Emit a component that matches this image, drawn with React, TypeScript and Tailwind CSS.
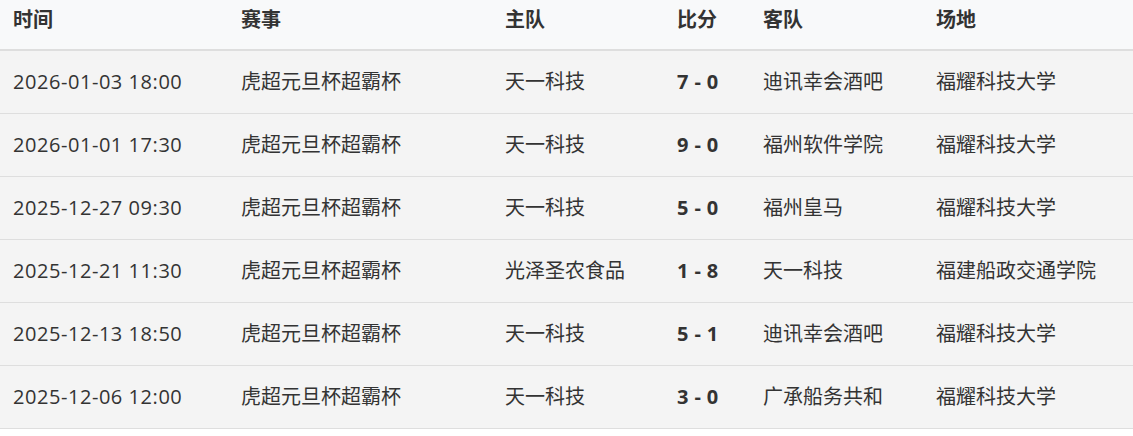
const rows = [
  { time: "2026-01-03 18:00", event: "虎超元旦杯超霸杯", home: "天一科技", score: "7 - 0", away: "迪讯幸会酒吧", venue: "福耀科技大学" },
  { time: "2026-01-01 17:30", event: "虎超元旦杯超霸杯", home: "天一科技", score: "9 - 0", away: "福州软件学院", venue: "福耀科技大学" },
  { time: "2025-12-27 09:30", event: "虎超元旦杯超霸杯", home: "天一科技", score: "5 - 0", away: "福州皇马", venue: "福耀科技大学" },
  { time: "2025-12-21 11:30", event: "虎超元旦杯超霸杯", home: "光泽圣农食品", score: "1 - 8", away: "天一科技", venue: "福建船政交通学院" },
  { time: "2025-12-13 18:50", event: "虎超元旦杯超霸杯", home: "天一科技", score: "5 - 1", away: "迪讯幸会酒吧", venue: "福耀科技大学" },
  { time: "2025-12-06 12:00", event: "虎超元旦杯超霸杯", home: "天一科技", score: "3 - 0", away: "广承船务共和", venue: "福耀科技大学" },
];

const cols = ["w-[228px]", "w-[264px]", "w-[172px]", "w-[86px]", "w-[173px]", "flex-1"];

export default function App() {
  return (
    <div className="w-[1133px] h-[436px] bg-white text-[#333] text-[20px] overflow-hidden" style={{ fontFamily: '"Open Sans", "Noto Sans CJK SC", sans-serif' }}>
      <div className="flex h-[51px] items-center bg-[#f8f9fa] border-b-2 border-[#dedede] font-bold">
        {["时间", "赛事", "主队", "比分", "客队", "场地"].map((h, i) => (
          <div key={h} className={`${cols[i]} pl-[13px] pb-[10px]`}>{h}</div>
        ))}
      </div>
      {rows.map((r) => (
        <div key={r.time} className="flex h-[63px] items-center bg-[#f4f4f4] border-b border-[#dedede]">
          <div className={`${cols[0]} pl-[13px] tracking-[0.55px]`}>{r.time}</div>
          <div className={`${cols[1]} pl-[13px]`}>{r.event}</div>
          <div className={`${cols[2]} pl-[13px]`}>{r.home}</div>
          <div className={`${cols[3]} pl-[13px] font-bold tracking-[0.4px]`}>{r.score}</div>
          <div className={`${cols[4]} pl-[13px]`}>{r.away}</div>
          <div className={`${cols[5]} pl-[13px]`}>{r.venue}</div>
        </div>
      ))}
    </div>
  );
}
